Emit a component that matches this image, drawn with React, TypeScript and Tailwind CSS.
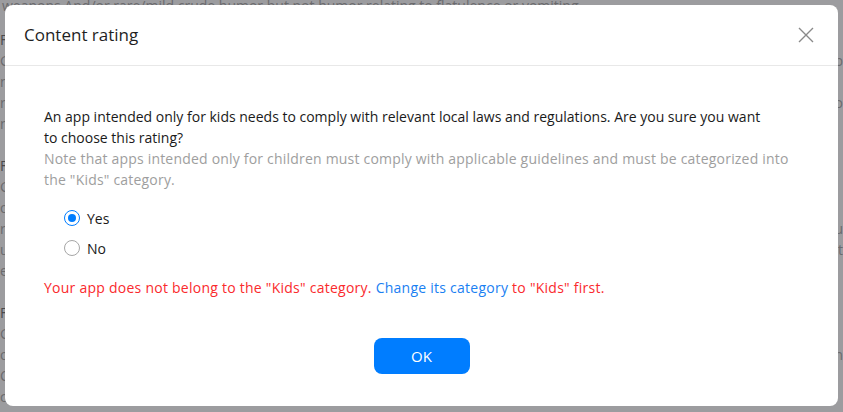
import React from "react";

const bgRows: { l: string; r: string; dark?: boolean }[] = [
  { l: "F", r: "", dark: true },
  { l: "G", r: "b" },
  { l: "n", r: "" },
  { l: "r", r: "o" },
  { l: "n", r: "" },
  { l: "", r: "" },
  { l: "F", r: "", dark: true },
  { l: "G", r: "" },
  { l: "o", r: "" },
  { l: "r", r: "u" },
  { l: "u", r: "t" },
  { l: "e", r: "" },
  { l: "", r: "" },
  { l: "F", r: "", dark: true },
  { l: "G", r: "" },
  { l: "o", r: "n" },
  { l: "C", r: "" },
  { l: "c", r: "" },
];

export default function App() {
  return (
    <div className="relative w-[843px] h-[412px] overflow-hidden bg-[#9c9c9f] font-['Open_Sans',sans-serif]">
      {/* page behind the overlay */}
      <div className="flex flex-col text-[14px] leading-[21px] text-[#6a6a6d]">
        <div className="-mt-[5px] pl-[2px] whitespace-nowrap">
          weapons And/or rare/mild crude humor but not humor relating to flatulence or vomiting
        </div>
        <div className="mt-[13px] flex flex-col">
          {bgRows.map((r, i) => (
            <div key={i} className="flex h-[21px] items-center justify-between">
              <span className={r.dark ? "text-[#4a4a4d]" : ""}>{r.l}</span>
              <span>{r.r}</span>
            </div>
          ))}
        </div>
      </div>

      {/* modal */}
      <div className="absolute left-[5px] top-[5px] flex h-[401px] w-[833px] flex-col rounded-[8px] bg-white">
        <div className="flex h-[61px] shrink-0 items-center justify-between border-b border-[#e8e8e8] pl-[19px] pr-[24px]">
          <span className="text-[17px] text-[#1f1f1f]">Content rating</span>
          <svg width="16" height="16" viewBox="0 0 16 16" className="text-[#8a8a8a]">
            <path d="M1 1 L15 15 M15 1 L1 15" stroke="currentColor" strokeWidth="1.4" fill="none" />
          </svg>
        </div>

        <div className="flex flex-col pl-[39px] pt-[40px] text-[14px] leading-[21px]">
          <p className="whitespace-nowrap text-[#1a1a1a]">
            An app intended only for kids needs to comply with relevant local laws and regulations. Are you sure you want
            <br />
            to choose this rating?
          </p>
          <p className="whitespace-nowrap text-[#9e9e9e] tracking-[0.2px]">
            Note that apps intended only for children must comply with applicable guidelines and must be categorized into
            <br />
            the "Kids" category.
          </p>

          <div className="mt-[13px] flex flex-col pl-[20px]">
            <div className="flex h-[30px] items-center gap-[7px]">
              <span className="flex h-[16px] w-[16px] items-center justify-center rounded-full border-[1.5px] border-[#007dff]">
                <span className="h-[8px] w-[8px] rounded-full bg-[#007dff]" />
              </span>
              <span className="text-[#1a1a1a]">Yes</span>
            </div>
            <div className="flex h-[30px] items-center gap-[7px]">
              <span className="h-[16px] w-[16px] rounded-full border border-[#a6a6a6]" />
              <span className="text-[#1a1a1a]">No</span>
            </div>
          </div>

          <p className="mt-[14px] whitespace-nowrap text-[#fa2a2d] tracking-[0.25px]">
            Your app does not belong to the "Kids" category. <span className="text-[#1a80f2]">Change its category</span> to "Kids" first.
          </p>
        </div>

        <div className="mt-[40px] flex justify-center">
          <button className="h-[36px] w-[96px] rounded-[8px] bg-[#007dff] text-[15px] text-white">OK</button>
        </div>
      </div>
    </div>
  );
}
